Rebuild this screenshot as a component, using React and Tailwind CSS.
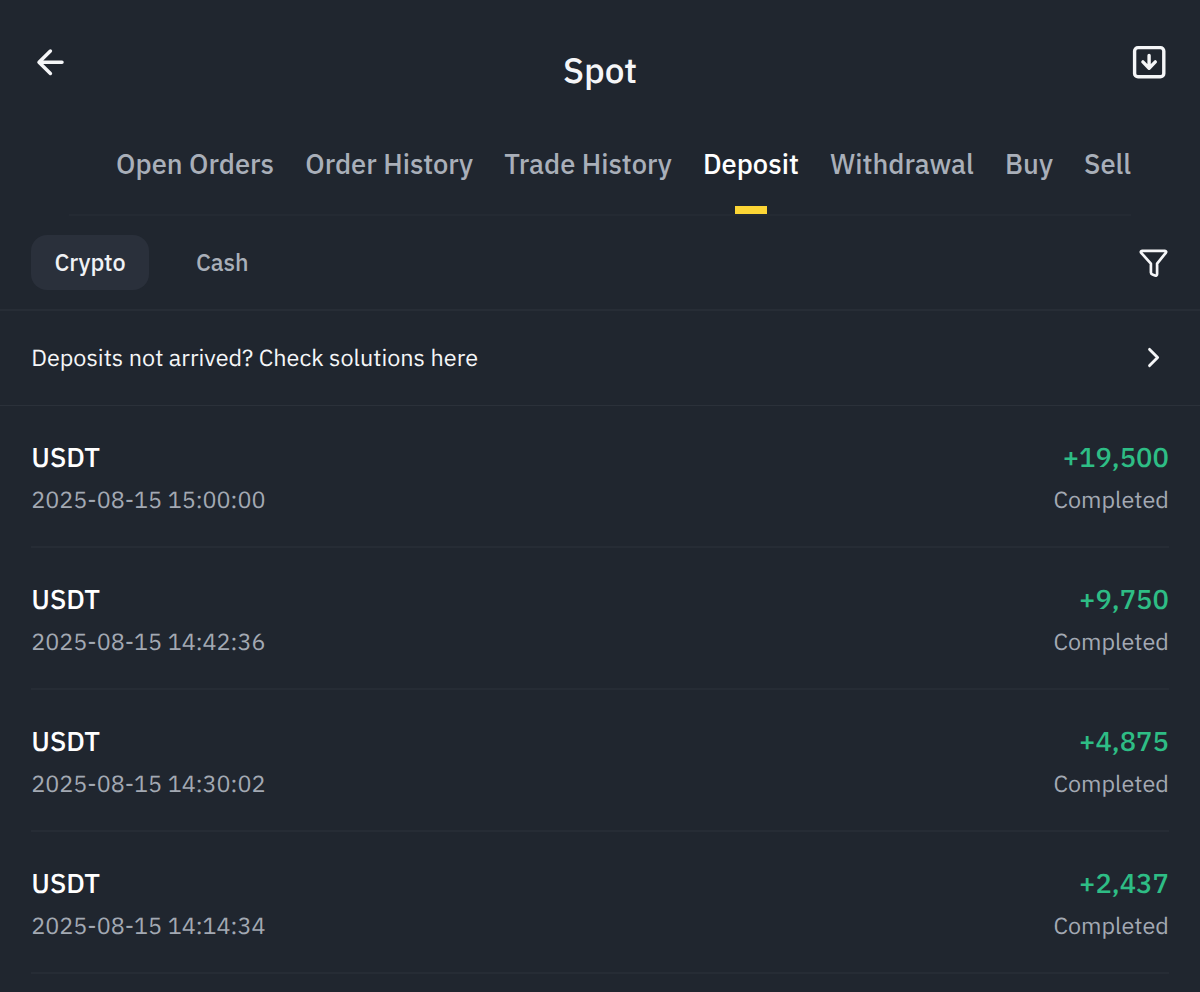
import React, { useState } from 'react';

const tabs = ['Open Orders', 'Order History', 'Trade History', 'Deposit', 'Withdrawal', 'Buy', 'Sell'];

const deposits = [
  { coin: 'USDT', date: '2025-08-15 15:00:00', amount: '+19,500', status: 'Completed' },
  { coin: 'USDT', date: '2025-08-15 14:42:36', amount: '+9,750', status: 'Completed' },
  { coin: 'USDT', date: '2025-08-15 14:30:02', amount: '+4,875', status: 'Completed' },
  { coin: 'USDT', date: '2025-08-15 14:14:34', amount: '+2,437', status: 'Completed' },
];

const BackIcon = () => (
  <svg width="30" height="34" viewBox="0 0 30 34" fill="none" stroke="currentColor" strokeWidth="3.5" strokeLinecap="round" strokeLinejoin="round">
    <path d="M16.4 6 5 17.2l11.4 11.2M6 17.2h22" />
  </svg>
);

const ExportIcon = () => (
  <svg width="34" height="34" viewBox="0 0 34 34" fill="none" stroke="currentColor" strokeWidth="3.4" strokeLinecap="round" strokeLinejoin="round">
    <rect x="2.6" y="2.6" width="29.2" height="29.2" rx="3.4" />
    <path d="M17.1 10.5v12.5M10.9 16.9l6.2 6.3 6.2-6.3" />
  </svg>
);

const FilterIcon = () => (
  <svg width="32" height="32" viewBox="0 0 32 32" fill="none" stroke="currentColor" strokeWidth="2.7" strokeLinecap="round" strokeLinejoin="round">
    <path d="M5 3.9h23c1.1 0 1.5 1.1.8 1.9L20.1 16.6V27c0 1.2-.9 1.8-2.1 1.5l-2.5-.9c-1-.4-1.6-1-1.6-2v-9L4.2 5.8c-.7-.8-.3-1.9.8-1.9Z" />
  </svg>
);

const ChevronIcon = () => (
  <svg width="16" height="24" viewBox="0 0 16 24" fill="none" stroke="currentColor" strokeWidth="2.9" strokeLinecap="round" strokeLinejoin="round">
    <path d="m4.6 3.4 8 8.1-8 8.1" />
  </svg>
);

const App = () => {
  const [activeTab, setActiveTab] = useState('Deposit');
  const [type, setType] = useState('Crypto');

  return (
    <div className="h-[992px] w-[1200px] overflow-hidden bg-[#20262f] font-['IBM_Plex_Sans','Roboto',sans-serif] text-[#f5f6f8] [text-rendering:geometricPrecision]">
      <header className="flex h-[128px] justify-between pl-[34px] pr-[34px] pt-[45px]">
        <button className="h-[34px] w-[34px]"><BackIcon /></button>
        <h1 className="pt-[4px] text-[35.1px] font-medium leading-[42px]">Spot</h1>
        <button className="h-[34px] w-[34px]"><ExportIcon /></button>
      </header>

      <nav className="mx-[69px] flex h-[88px] justify-end gap-[31.2px] border-b-2 border-[#242a33] text-[27.3px] font-medium">
        {tabs.map((tab) => (
          <button
            key={tab}
            onClick={() => setActiveTab(tab)}
            className={`flex shrink-0 flex-col items-center justify-between whitespace-nowrap pt-[16px] ${activeTab === tab ? 'text-white' : 'text-[#a9afb9]'}`}
          >
            <span className="leading-[40px]">{tab}</span>
            {activeTab === tab && <span className="h-2 w-8 bg-[#fcd535]" />}
          </button>
        ))}
      </nav>

      <div className="flex h-[95px] items-center justify-between border-b-2 border-[#272d36] pl-[31px] pr-[31px]">
        <div className="flex text-[23.4px] font-medium">
          {['Crypto', 'Cash'].map((item) => (
            <button
              key={item}
              onClick={() => setType(item)}
              className={`h-[55px] rounded-[16px] px-[23.4px] ${type === item ? 'mr-[23.4px] bg-[#2a303b] text-[#f0f2f5]' : 'text-[#a9afb9]'}`}
            >
              {item}
            </button>
          ))}
        </div>
        <button><FilterIcon /></button>
      </div>

      <a className="flex h-[95px] items-center justify-between border-b border-[#2b313a] pl-[31.2px] pr-[39px]">
        <span className="pt-[2px] text-[23.4px]">Deposits not arrived? Check solutions here</span>
        <ChevronIcon />
      </a>

      <ul className="px-[31.2px]">
        {deposits.map((item) => (
          <li key={item.date} className="flex h-[142px] justify-between border-b-2 border-[#262c35] pt-[30px]">
            <div>
              <p className="text-[27.3px] font-medium leading-[42px] text-white">{item.coin}</p>
              <p className="text-[23.4px] leading-[44px] text-[#a3a9b3]">{item.date}</p>
            </div>
            <div className="text-right">
              <p className="text-[27.3px] font-medium leading-[42px] text-[#2ebd85]">{item.amount}</p>
              <p className="text-[23.4px] leading-[44px] text-[#a3a9b3]">{item.status}</p>
            </div>
          </li>
        ))}
      </ul>
    </div>
  );
};

export default App;
